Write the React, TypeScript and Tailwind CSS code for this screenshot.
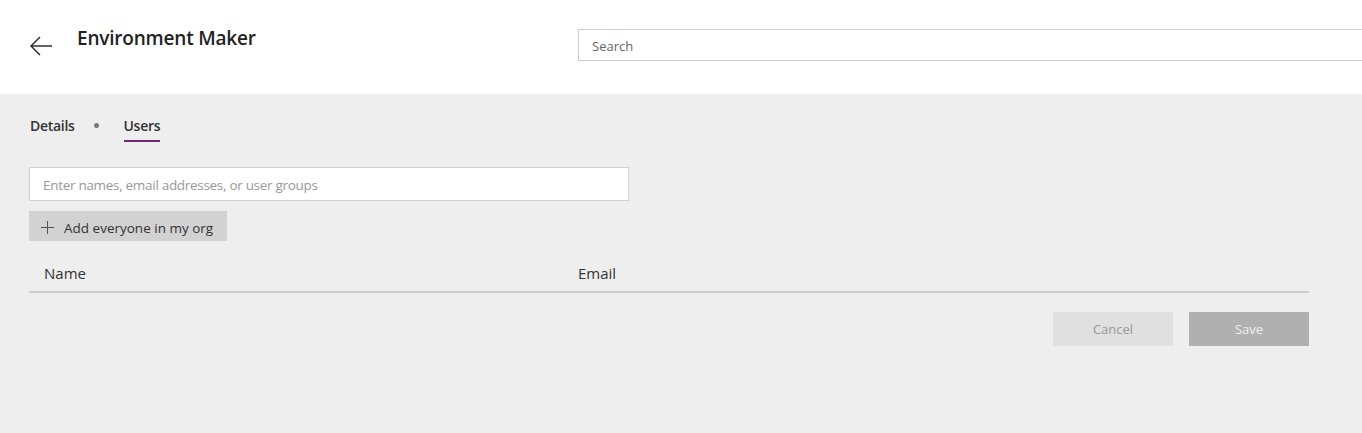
export default function App() {
  return (
    <div className="w-[1362px] h-[433px] overflow-hidden bg-[#eeeeee] font-['Open_Sans',sans-serif] text-[#333333]">
      <header className="h-[94px] bg-white flex items-start">
        <button className="ml-[29px] mt-[35px] w-[24px] h-[22px] flex items-center justify-center text-[#222]">
          <svg width="24" height="20" viewBox="0 0 24 20" fill="none" stroke="currentColor" strokeWidth="1.4">
            <path d="M23 10H2" />
            <path d="M11 1L2 10l9 9" />
          </svg>
        </button>
        <h1 className="ml-[24px] mt-[24px] text-[19px] font-semibold text-[#222] tracking-[-0.2px]">Environment Maker</h1>
        <div className="ml-auto mt-[29px] w-[784px] h-[32px] border border-[#cccccc] border-r-0 flex items-center px-[13px] pt-[3px]">
          <span className="text-[13px] text-[#666666]">Search</span>
        </div>
      </header>

      <main className="px-[29px]">
        <nav className="flex items-center h-[48px] pt-[14px]">
          <span className="text-[14px] font-semibold text-[#333] ml-px tracking-[-0.3px]">Details</span>
          <span className="w-[5px] h-[5px] rounded-full bg-[#777] ml-[19px] mr-[25px]" />
          <span className="relative text-[14px] font-semibold text-[#333] tracking-[-0.3px]">
            Users
            <span className="absolute left-0 right-0 -bottom-[6px] h-[2px] bg-[#742774]" />
          </span>
        </nav>

        <div className="mt-[25px] w-[600px] h-[34px] bg-white border border-[#d0d0d0] flex items-center px-[13px] pt-[3px]">
          <span className="text-[13.5px] text-[#999999] tracking-[-0.3px]">Enter names, email addresses, or user groups</span>
        </div>

        <button className="mt-[10px] h-[30px] w-[198px] bg-[#d2d2d2] flex items-center pl-[12px] gap-[10px] pt-[4px]">
          <svg width="13" height="13" viewBox="0 0 13 13" stroke="#555" strokeWidth="1" className="-mt-[2px]">
            <path d="M6.5 0v13M0 6.5h13" />
          </svg>
          <span className="text-[13.5px] text-[#333]">Add everyone in my org</span>
        </button>

        <div className="w-[1280px] mt-[22px] h-[30px] border-b-2 border-[#cccccc] flex items-center pb-[8px] text-[15px] text-[#333]">
          <span className="pl-[15px] w-[549px]">Name</span>
          <span>Email</span>
        </div>

        <div className="w-[1280px] mt-[19px] flex justify-end gap-[16px]">
          <button className="w-[120px] h-[34px] bg-[#e0e0e0] text-[13px] text-[#999999] pt-[2px]">Cancel</button>
          <button className="w-[120px] h-[34px] bg-[#b0b0b0] text-[13px] text-[#f0f0f0] pt-[2px]">Save</button>
        </div>
      </main>
    </div>
  );
}
